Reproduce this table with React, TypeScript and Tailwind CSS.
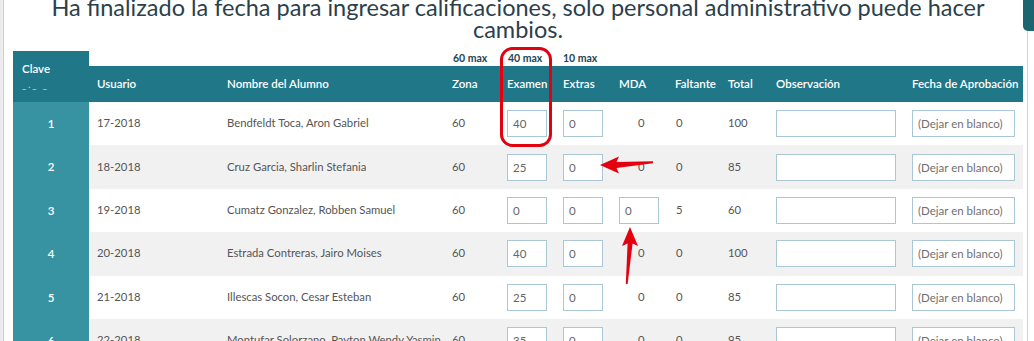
const cols = 'grid grid-cols-[76px_130px_225px_55px_56px_56px_56px_53px_48px_136px_119px]';

const alumnos = [
  { n: 1, user: '17-2018', name: 'Bendfeldt Toca, Aron Gabriel', zona: 60, examen: '40', extras: '0', mda: null, faltante: 0, total: 100 },
  { n: 2, user: '18-2018', name: 'Cruz Garcia, Sharlin Stefania', zona: 60, examen: '25', extras: '0', mda: null, faltante: 0, total: 85 },
  { n: 3, user: '19-2018', name: 'Cumatz Gonzalez, Robben Samuel', zona: 60, examen: '0', extras: '0', mda: '0', faltante: 5, total: 60 },
  { n: 4, user: '20-2018', name: 'Estrada Contreras, Jairo Moises', zona: 60, examen: '40', extras: '0', mda: null, faltante: 0, total: 100 },
  { n: 5, user: '21-2018', name: 'Illescas Socon, Cesar Esteban', zona: 60, examen: '25', extras: '0', mda: null, faltante: 0, total: 85 },
  { n: 6, user: '22-2018', name: 'Montufar Solorzano, Payton Wendy Yasmin', zona: 60, examen: '35', extras: '0', mda: null, faltante: 0, total: 95 },
];

function Campo({ value, className, placeholder }: { value?: string; className: string; placeholder?: string }) {
  return (
    <input
      readOnly
      value={value ?? ''}
      placeholder={placeholder}
      className={`h-[27px] border border-[#a9c7d4] bg-white pl-[5px] text-[11.5px] text-[#666] outline-none placeholder:text-[#707070] ${className}`}
    />
  );
}

export default function App() {
  return (
    <div className="relative h-[341px] w-[1034px] overflow-hidden bg-white font-['Lato','Open_Sans',sans-serif]">
      <div className="flex h-full">
        <div className="w-[4px] shrink-0 border-r border-[#d0d0d0] bg-[#ececec]" />

        <div className="w-[1023px] shrink-0 pl-[9px] pr-[4px]">
          <h2 className="mt-[-4px] text-center text-[23.5px] leading-[22px] text-[#2b3f4c]">
            Ha finalizado la fecha para ingresar calificaciones, solo personal administrativo puede hacer cambios.
          </h2>

          <div className={`${cols} mt-[11px] grid-rows-[15px_36px]`}>
            <div className="row-span-2 bg-[#1f7788] pl-[9px] pt-[11px] text-[11.5px] font-semibold leading-[14px] text-white">
              <div>Clave</div>
              <div className="mt-[6px] text-[9px] leading-[6px] tracking-[2px] text-white/70">_._ _</div>
            </div>
            <div />
            <div />
            <div className="flex items-center pl-[9px] text-[10.5px] font-bold text-[#1d4653]">60 max</div>
            <div className="flex items-center pl-[9px] text-[10.5px] font-bold text-[#1d4653]">40 max</div>
            <div className="flex items-center pl-[8px] text-[10.5px] font-bold text-[#1d4653]">10 max</div>
            <div />
            <div />
            <div />
            <div />
            <div />
            {['Usuario', 'Nombre del Alumno', 'Zona', 'Examen', 'Extras', 'MDA', 'Faltante', 'Total', 'Observación', 'Fecha de Aprobación'].map(h => (
              <div key={h} className="flex items-center bg-[#1f7788] pl-[8px] text-[11.5px] font-semibold whitespace-nowrap text-white">
                {h}
              </div>
            ))}
          </div>

          {alumnos.map(a => (
            <div key={a.n} className={`${cols} h-[43.4px] text-[11.3px] text-[#555] ${a.n % 2 === 0 ? 'bg-[#f1f1f1]' : 'bg-white'}`}>
              <div className="flex items-center justify-center bg-[#3793a1] text-[11.5px] font-semibold text-white">{a.n}</div>
              <div className="flex items-center pl-[8px]">{a.user}</div>
              <div className="flex items-center pl-[8px] whitespace-nowrap">{a.name}</div>
              <div className="flex items-center pl-[8px]">{a.zona}</div>
              <div className="flex items-center pl-[8px]">
                <Campo value={a.examen} className="w-[40px]" />
              </div>
              <div className="flex items-center pl-[8px]">
                <Campo value={a.extras} className="w-[40px]" />
              </div>
              <div className="flex items-center pl-[8px]">
                {a.mda !== null ? <Campo value={a.mda} className="w-[40px]" /> : <span className="pl-[19px]">0</span>}
              </div>
              <div className="flex items-center pl-[9px]">{a.faltante}</div>
              <div className="flex items-center pl-[8px]">{a.total}</div>
              <div className="flex items-center pl-[8px]">
                <Campo className="w-[120px]" />
              </div>
              <div className="flex items-center pl-[8px]">
                <Campo className="w-[103px]" placeholder="(Dejar en blanco)" />
              </div>
            </div>
          ))}
        </div>

        <div className="w-[7px] shrink-0 border-l border-[#d4d4d4] bg-white" />
      </div>

      {/* floating tab at top right */}
      <div className="absolute top-0 right-0 h-[31px] w-[11px] rounded-bl-[5px] bg-[#1d6471]" />

      {/* red annotations */}
      <svg className="pointer-events-none absolute inset-0" width="1034" height="341" viewBox="0 0 1034 341">
        <rect x="501.5" y="48.5" width="49" height="97" rx="11" fill="none" stroke="#e3000f" strokeWidth="3" />
        <polygon points="600,165 619,156.5 616.5,162 653,161.2 653,163.2 616.5,168 619,173.5" fill="#e3000f" />
        <polygon points="630,227 638,246 632.6,243.5 627.6,284 625.8,284 627.6,243.5 622,246" fill="#e3000f" />
      </svg>
    </div>
  );
}
